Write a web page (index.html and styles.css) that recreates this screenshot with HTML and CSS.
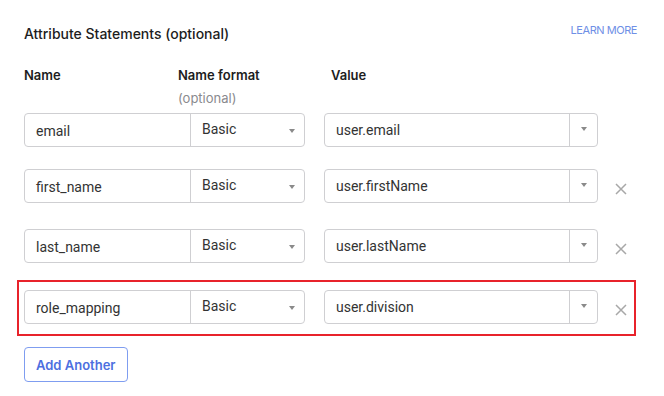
FILE: index.html
```html
<!DOCTYPE html>
<html lang="en">
<head>
    <meta charset="UTF-8">
    <title>Attribute Statements</title>
    <link rel="stylesheet" href="styles.css">
</head>
<body>
    <div class="panel">
        <div class="head">
            <div class="title">Attribute Statements (optional)</div>
            <a class="learn" href="#">LEARN MORE</a>
        </div>
        <div class="labels">
            <div class="lbl lbl-name">Name</div>
            <div class="lbl lbl-format">Name format<span class="opt">(optional)</span></div>
            <div class="lbl lbl-value">Value</div>
        </div>

        <div class="row">
            <div class="pair">
                <div class="field name">email</div>
                <div class="field format">Basic<span class="caret"></span></div>
            </div>
            <div class="field value"><span class="val">user.email</span><span class="drop"><span class="caret"></span></span></div>
        </div>

        <div class="row">
            <div class="pair">
                <div class="field name">first_name</div>
                <div class="field format">Basic<span class="caret"></span></div>
            </div>
            <div class="field value"><span class="val">user.firstName</span><span class="drop"><span class="caret"></span></span></div>
            <div class="remove">
                <svg width="12" height="12" viewBox="0 0 12 12"><path d="M1 1L11 11M11 1L1 11" stroke="#a8a8a8" stroke-width="1.5" fill="none"/></svg>
            </div>
        </div>

        <div class="row">
            <div class="pair">
                <div class="field name">last_name</div>
                <div class="field format">Basic<span class="caret"></span></div>
            </div>
            <div class="field value"><span class="val">user.lastName</span><span class="drop"><span class="caret"></span></span></div>
            <div class="remove">
                <svg width="12" height="12" viewBox="0 0 12 12"><path d="M1 1L11 11M11 1L1 11" stroke="#a8a8a8" stroke-width="1.5" fill="none"/></svg>
            </div>
        </div>

        <div class="highlight">
            <div class="row last">
                <div class="pair">
                    <div class="field name">role_mapping</div>
                    <div class="field format">Basic<span class="caret"></span></div>
                </div>
                <div class="field value"><span class="val">user.division</span><span class="drop"><span class="caret"></span></span></div>
                <div class="remove">
                    <svg width="12" height="12" viewBox="0 0 12 12"><path d="M1 1L11 11M11 1L1 11" stroke="#a8a8a8" stroke-width="1.5" fill="none"/></svg>
                </div>
            </div>
        </div>

        <button class="add" type="button">Add Another</button>
    </div>
</body>
</html>
```

FILE: styles.css
```css
*{
    box-sizing: border-box;
}
body {
    margin: 0;
    padding: 0;
    background: #fff;
    font-family: Inter, "Noto Sans", sans-serif;
    color: #1d1d21;
}
.panel {
    padding: 24px 27px 0 24px;
}
.head {
    display: flex;
    justify-content: space-between;
    align-items: flex-start;
}
.title {
    font-size: 14px;
    font-weight: 500;
    line-height: 20px;
    color: #1d1d21;
}
.learn {
    font-size: 11px;
    line-height: 12px;
    color: #6f8fe6;
    text-decoration: none;
    letter-spacing: -0.45px;
}
.labels {
    display: flex;
    margin-top: 22px;
    height: 47px;
}
.lbl {
    font-size: 13px;
    font-weight: 600;
    line-height: 18px;
}
.lbl-name {
    width: 154px;
}
.lbl-format {
    width: 153px;
}
.opt {
    display: block;
    margin-top: 5px;
    font-weight: normal;
    color: #8a8a8e;
}
.row {
    display: flex;
    align-items: flex-start;
    margin-bottom: 22px;
}
.row.last {
    margin-bottom: 0;
}
.row > * {
    flex-shrink: 0;
}
.pair {
    display: flex;
    width: 281px;
    height: 34px;
    border: 1px solid #cfcfd2;
    border-radius: 4px;
}
.field {
    height: 34px;
    font-family: Roboto, "Liberation Sans", sans-serif;
    font-size: 14px;
    line-height: 34px;
    color: #333;
    position: relative;
}
.pair .field {
    height: 32px;
}
.name {
    width: 166px;
    padding-left: 11px;
    border-right: 1px solid #cfcfd2;
}
.format {
    flex: 1;
    padding-left: 11px;
    line-height: 31px;
}
.format .caret {
    position: absolute;
    right: 9px;
    top: 15px;
}
.caret {
    display: inline-block;
    width: 0;
    height: 0;
    border-left: 3px solid transparent;
    border-right: 3px solid transparent;
    border-top: 4px solid #8a8a8a;
}
.value {
    display: flex;
    width: 274px;
    margin-left: 19px;
    border: 1px solid #cfcfd2;
    border-radius: 4px;
    line-height: 32px;
}
.val {
    flex: 1;
    padding-left: 11px;
}
.drop {
    width: 28px;
    border-left: 1px solid #cfcfd2;
    display: flex;
    justify-content: center;
    padding-top: 13px;
}
.remove {
    width: 44px;
    height: 38px;
    display: flex;
    justify-content: center;
    padding-top: 14px;
    padding-left: 2px;
}
.highlight {
    width: 619px;
    margin: -9px 0 0 -7px;
    border: 2px solid #e8232b;
    padding: 8px 5px 6px 5px;
}
.add {
    margin-top: 11px;
    height: 35px;
    padding: 0 11px;
    font-family: Inter, "Noto Sans", sans-serif;
    font-size: 13px;
    font-weight: 600;
    color: #4d6fe0;
    background: #fff;
    border: 1px solid #7f9df0;
    border-radius: 4px;
}
```
